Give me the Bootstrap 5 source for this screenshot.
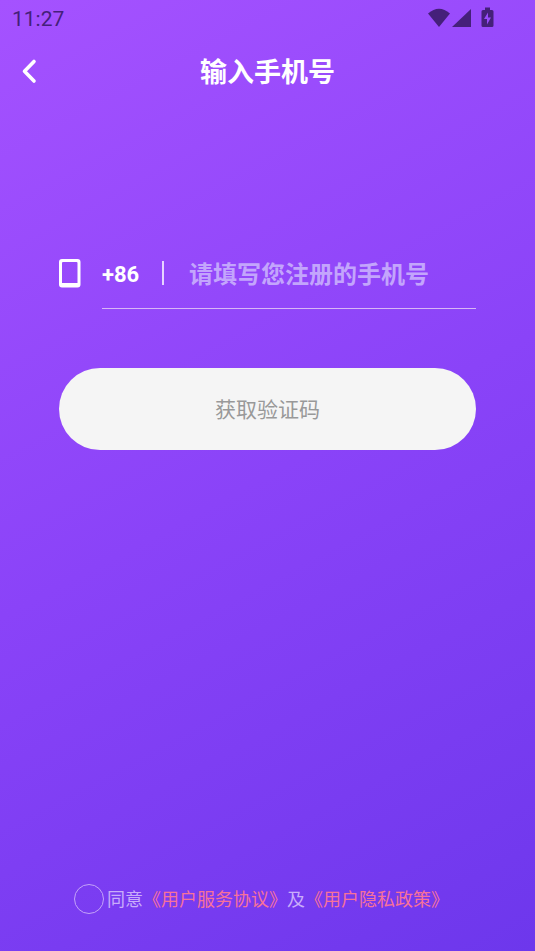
<!DOCTYPE html>
<html lang="zh-CN">
<head>
<meta charset="utf-8">
<meta name="viewport" content="width=device-width, initial-scale=1">
<title>输入手机号</title>
<link href="https://cdn.jsdelivr.net/npm/bootstrap@5.3.0/dist/css/bootstrap.min.css" rel="stylesheet">
<style>
  body {
    font-family: Roboto, "Noto Sans CJK SC", sans-serif;
    background: linear-gradient(152deg, #a552ff 0%, #8a43f8 50%, #6d37ec 100%) no-repeat;
  }
  .status-bar { height: 36px; padding: 0 40px 0 12px; color: #45207a; }
  .clock { font-size: 21px; line-height: 36px; padding-top: 2px; }
  .top-bar { display: grid; grid-template-columns: 56px 1fr 56px; height: 70px; }
  .back-btn { padding: 0 0 0 20px; text-align: left; }
  .page-title { font-size: 27px; line-height: 40px; padding-top: 4px; }
  .form-area { padding: 132px 59px 0; }
  .phone-icon { width: 43px; padding-top: 21px; }
  .phone-field { height: 71px; border-bottom: 1px solid #d8b6f5; }
  .country-code { font-size: 22px; width: 60px; padding-top: 2px; }
  .divider { width: 2px; height: 24px; background: #e6d3ff; }
  .phone-input { font-size: 24px; line-height: 36px; padding: 4px 0 0 25px; min-width: 0; }
  .phone-input, .phone-input:focus { background: transparent; color: #fff; box-shadow: none; }
  .phone-input::placeholder { color: #c3a5fc; opacity: 1; }
  .code-btn { height: 82px; margin-top: 59px; padding-top: 10px; font-size: 21px; }
  .code-btn, .code-btn:hover { background: #f5f5f5; color: #999; }
  .terms { gap: 3px; padding: 0 20px 36px 74px; font-size: 18px; line-height: 30px; color: #c9adfa; }
  .terms-text { padding-top: 2px; }
  .terms a { color: #f77299; }
  .terms .form-check-input { width: 30px; height: 30px; border: 1px solid #c4a3f8; background-color: transparent; }
  .terms .form-check-input:checked { background-color: #ff7895; }
</style>
</head>
<body class="min-vh-100 d-flex flex-column">
  <div class="status-bar d-flex align-items-center justify-content-between">
    <span class="clock">11:27</span>
    <svg width="68" height="24" viewBox="0 0 68 24" fill="currentColor" aria-hidden="true">
      <path d="M1 7.6Q12 -2 23 7.6L12 21Z"/>
      <path d="M44 3V21H25Z"/>
      <path fill-rule="evenodd" d="M58 1.5H63V4H65Q66.500 4 66.500 5.500V19.500Q66.500 21 65 21H56Q54.500 21 54.500 19.500V5.500Q54.500 4 56 4H58ZM61 6.500L57 13H60V18.500L64 11.500H61Z"/>
    </svg>
  </div>
  <header class="top-bar align-items-center">
    <button type="button" class="btn border-0 back-btn" aria-label="返回">
      <svg class="d-block" width="18" height="26" viewBox="0 0 18 26" fill="none" stroke="#fff" stroke-width="3.600" stroke-linecap="round" stroke-linejoin="round" aria-hidden="true"><path d="M14 3.500L4.500 13.300L14 23"/></svg>
    </button>
    <h1 class="page-title fw-bold text-white text-center m-0">输入手机号</h1>
  </header>
  <main class="form-area flex-grow-1">
    <form>
      <div class="d-flex">
        <div class="phone-icon flex-shrink-0">
          <svg class="d-block" width="22" height="29" viewBox="0 0 22 29" aria-hidden="true"><path fill="#fff" fill-rule="evenodd" d="M3 0H18.500Q21.500 0 21.500 3V25.500Q21.500 28.500 18.500 28.500H3Q0 28.500 0 25.500V3Q0 0 3 0ZM4 3Q3 3 3 4V24H18.500V4Q18.500 3 17.500 3Z"/></svg>
        </div>
        <div class="phone-field d-flex align-items-center flex-grow-1">
          <label for="phone" class="country-code fw-bold text-white flex-shrink-0">+86</label>
          <span class="divider flex-shrink-0"></span>
          <input id="phone" type="tel" class="phone-input form-control border-0 rounded-0 fw-bold" placeholder="请填写您注册的手机号">
        </div>
      </div>
      <button type="button" class="btn code-btn w-100 border-0 rounded-pill">获取验证码</button>
    </form>
  </main>
  <footer class="terms d-flex align-items-center">
    <input id="agree" type="checkbox" class="form-check-input rounded-circle flex-shrink-0 m-0">
    <div class="terms-text"><label for="agree">同意</label><a href="#" class="text-decoration-none">《用户服务协议》</a>及<a href="#" class="text-decoration-none">《用户隐私政策》</a></div>
  </footer>
<script src="https://cdn.jsdelivr.net/npm/bootstrap@5.3.0/dist/js/bootstrap.bundle.min.js"></script>
</body>
</html>
